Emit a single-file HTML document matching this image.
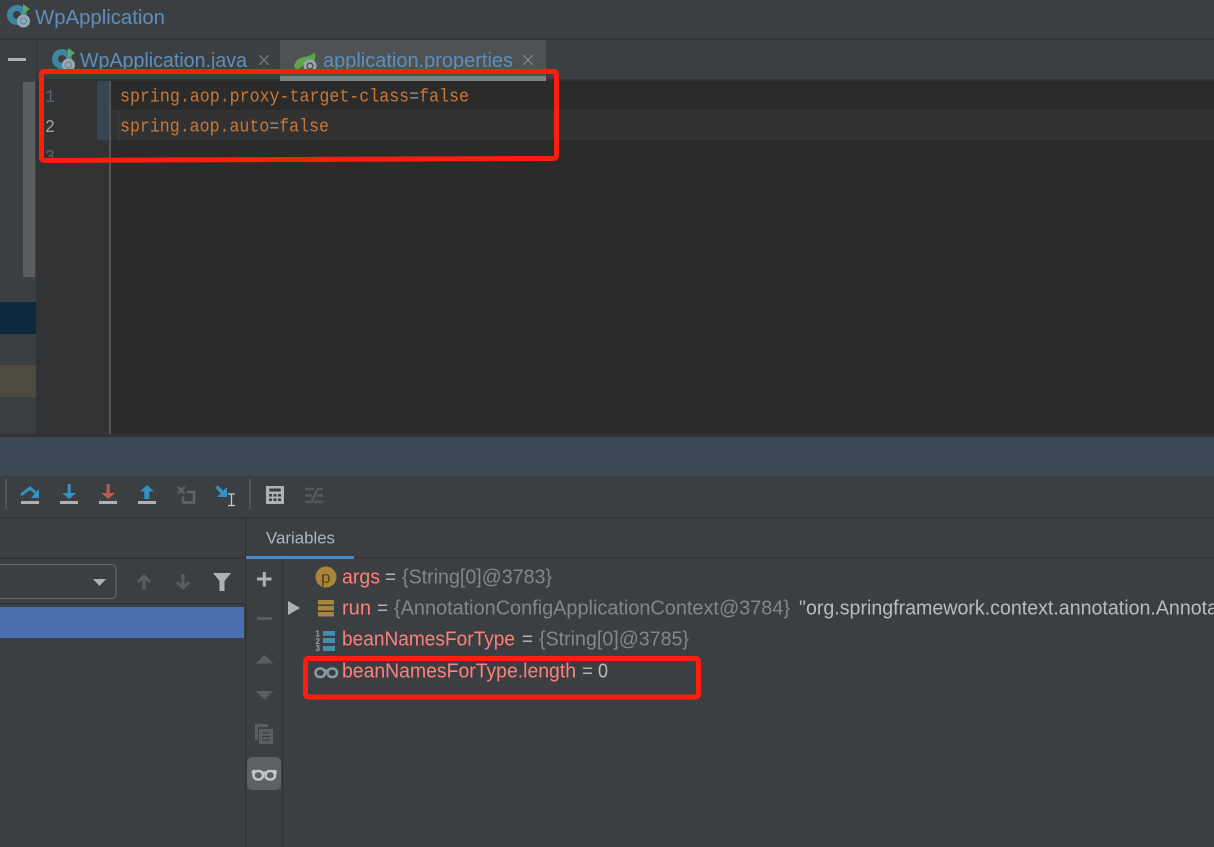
<!DOCTYPE html>
<html><head><meta charset="utf-8"><title>WpApplication</title>
<style>html,body{margin:0;padding:0;background:#3c3f41;width:1214px;height:847px;overflow:hidden}svg{display:block}
.s{font-family:"Liberation Sans",sans-serif}.m{font-family:"Liberation Mono",monospace}</style></head>
<body>
<svg width="1214" height="847" viewBox="0 0 1214 847" xmlns="http://www.w3.org/2000/svg">
<defs>
<g id="app"><circle cx="9" cy="10" r="10" fill="#3e86a0"/><circle cx="9" cy="10" r="4" fill="#3c3f41"/><path d="M15 -1l7 5-7 5z" fill="#59a869"/><circle cx="15.500" cy="16" r="5.500" fill="#9aa7b0" stroke="#9aa7b0" stroke-width="2"/><circle cx="15.500" cy="16" r="3" fill="none" stroke="#4a88a8" stroke-width="1"/></g>
</defs>
<rect width="1214" height="847" fill="#3c3f41"/>
<!-- title bar -->
<use href="#app" x="8" y="5"/>
<text class="s" x="35" y="24" font-size="20" fill="#5f8fbd" textLength="130" lengthAdjust="spacingAndGlyphs">WpApplication</text>
<rect y="38" width="1214" height="2" fill="#323232"/>
<!-- left panel -->
<rect y="40" width="36" height="394" fill="#3c3f41"/>
<rect x="36" y="38" width="1.500" height="396" fill="#323232"/>
<rect x="8" y="58" width="18" height="3" fill="#afb1b3"/>
<rect x="23" y="82" width="12" height="195" fill="#5a5c5e"/>
<rect y="302" width="36" height="32" fill="#0d293e"/>
<rect y="365" width="36" height="32" fill="#4d4a3f"/>
<!-- tabs -->
<rect x="37" y="40" width="1177" height="40" fill="#3c3f41"/>
<use href="#app" x="53" y="49"/>
<text class="s" x="80" y="67" font-size="20" fill="#5f8fbd" textLength="167" lengthAdjust="spacingAndGlyphs">WpApplication.java</text>
<path d="M259 55l10 10M269 55l-10 10" stroke="#6e7173" stroke-width="1.500" fill="none"/>
<rect x="280" y="40" width="266" height="40" fill="#4e5254"/>
<path d="M294 66Q296 58 304 57Q311 56 315 52Q316 60 313 63L305 63Q300 70 296 69Z" fill="#62a14d"/>
<circle cx="310" cy="66" r="6.500" fill="#9aa7b0"/><circle cx="310" cy="66" r="3" fill="none" stroke="#45494b" stroke-width="1.300"/>
<text class="s" x="323" y="67" font-size="20" fill="#5f8fbd" textLength="190" lengthAdjust="spacingAndGlyphs">application.properties</text>
<path d="M523 55l10 10M533 55l-10 10" stroke="#797c7e" stroke-width="1.500" fill="none"/>
<rect x="280" y="76" width="266" height="5" fill="#7d8082"/>
<rect x="37" y="79" width="243" height="2" fill="#323232"/>
<rect x="546" y="79" width="668" height="2" fill="#323232"/>
<!-- editor -->
<rect x="37" y="81" width="1177" height="353" fill="#2b2b2b"/>
<rect x="37" y="81" width="72" height="353" fill="#313335"/>
<rect x="109" y="81" width="2" height="353" fill="#555555"/>
<rect x="111" y="110" width="1103" height="30" fill="#323232"/>
<rect x="97" y="81" width="12" height="59" fill="#344653"/>
<rect x="118.500" y="110" width="1" height="30" fill="#3d3d3d"/>
<text class="m" x="45" y="102" font-size="18" fill="#606366" textLength="10" lengthAdjust="spacingAndGlyphs">1</text>
<text class="m" x="45" y="132" font-size="18" fill="#a4a3a3" textLength="10" lengthAdjust="spacingAndGlyphs">2</text>
<text class="m" x="45" y="162" font-size="18" fill="#606366" textLength="10" lengthAdjust="spacingAndGlyphs">3</text>
<text class="m" x="120" y="101.500" font-size="18" fill="#cc7832" textLength="349" lengthAdjust="spacingAndGlyphs"><tspan>spring.aop.proxy-target-class</tspan><tspan fill="#8f8f8f">=</tspan><tspan>false</tspan></text>
<text class="m" x="120" y="131.500" font-size="18" fill="#cc7832" textLength="209" lengthAdjust="spacingAndGlyphs"><tspan>spring.aop.auto</tspan><tspan fill="#8f8f8f">=</tspan><tspan>false</tspan></text>
<!-- divider and debug header -->
<rect y="434" width="1214" height="3" fill="#323232"/>
<rect y="437" width="1214" height="39" fill="#3b4754"/>
<!-- toolbar -->
<rect y="476" width="1214" height="41" fill="#3c3f41"/>
<rect x="5" y="479" width="2" height="30" fill="#515658"/>
<rect x="249" y="479" width="2" height="30" fill="#515658"/>
<rect x="21" y="501" width="18" height="3" fill="#afb1b3"/>
<path d="M21 495l9-7 6 5" fill="none" stroke="#3592c4" stroke-width="3"/><path d="M39 489v9h-8z" fill="#3592c4"/>
<rect x="60" y="501" width="18" height="3" fill="#afb1b3"/>
<path d="M67.700 484h3v9h5.500l-7 6-7-6h5.500z" fill="#3592c4"/>
<rect x="99" y="501" width="18" height="3" fill="#afb1b3"/>
<path d="M106.700 484h3v9h5.500l-7 6-7-6h5.500z" fill="#c75450"/>
<rect x="138" y="501" width="18" height="3" fill="#afb1b3"/>
<path d="M147 485l7 6.500h-4.700v7.500h-5v-7.500h-4.300z" fill="#3592c4"/>
<path d="M178 487l6.500 6.500M184.500 487l-6.500 6.500" stroke="#5f6365" stroke-width="2.500" fill="none"/><path d="M187 492h7v10.500h-11v-6" fill="none" stroke="#5f6365" stroke-width="2.500"/>
<path d="M216.500 486.500l8 8" stroke="#3592c4" stroke-width="3.500" fill="none"/><path d="M227 487v10h-10z" fill="#3592c4"/>
<path d="M228 494h7M228 505.500h7M231.500 494v11.500" stroke="#c8c8c8" stroke-width="1.300" fill="none"/>
<rect x="266" y="486" width="18" height="18" fill="#afb1b3"/><rect x="269.300" y="488.500" width="11.400" height="3" fill="#3c3f41"/>
<path d="M269 494h3v2.500h-3zM273.500 494h3v2.500h-3zM278 494h3v2.500h-3zM269 498.500h3v2.500h-3zM273.500 498.500h3v2.500h-3zM278 498.500h3v2.500h-3z" fill="#3c3f41"/>
<path d="M305 489h9M318 489h5M305 495.500h7M317 495.500h6M305 502h5M314 502h9M311 503l7-15" stroke="#55595b" stroke-width="2.500" fill="none"/>
<rect y="517" width="1214" height="1.500" fill="#323232"/>
<!-- frames panel -->
<rect y="557" width="245" height="2" fill="#323232"/>
<rect x="245" y="518" width="1.500" height="329" fill="#323232"/>
<rect x="-10" y="564.500" width="126" height="34" rx="4" fill="none" stroke="#646464" stroke-width="1.300"/>
<path d="M93 579h13l-6.500 7z" fill="#afb1b3"/>
<path d="M144 590v-14M138 582l6-6 6 6" stroke="#5b5e60" stroke-width="3" fill="none"/>
<path d="M183 574v14M177 582l6 6 6-6" stroke="#5b5e60" stroke-width="3" fill="none"/>
<path d="M213 573h18l-6.500 8v10h-5v-10z" fill="#afb1b3"/>
<rect y="603" width="245" height="1.500" fill="#323232"/>
<rect y="607" width="244" height="31" fill="#4b6eaf"/>
<!-- variables -->
<text class="s" x="266" y="543.500" font-size="16.500" fill="#a9b7c6" textLength="69" lengthAdjust="spacingAndGlyphs">Variables</text>
<rect x="246" y="556" width="108" height="3" fill="#4a88c7"/>
<rect x="354" y="557.500" width="860" height="1.300" fill="#323232"/>
<rect x="282" y="559" width="1.300" height="288" fill="#323232"/>
<path d="M257 579h14.500M264.300 572v14.500" stroke="#afb1b3" stroke-width="3" fill="none"/>
<rect x="257" y="617" width="15" height="3" fill="#5b5e60"/>
<path d="M255.500 663.500l9-8.500 9 8.500z" fill="#5b5e60"/>
<path d="M255.500 691h18l-9 8.500z" fill="#5b5e60"/>
<path d="M255 724h13v3h-10v13h-3z" fill="#5b5e60"/><rect x="259" y="729" width="14" height="15" fill="#5b5e60"/>
<path d="M262 733h8M262 736.500h8M262 740h8" stroke="#3c3f41" stroke-width="1.200"/>
<rect x="247" y="757" width="34" height="33" rx="5" fill="#5c6164"/>
<g fill="none" stroke="#c4c6c8" stroke-width="2.500"><rect x="253.500" y="771" width="9.500" height="8.500" rx="4.200"/><rect x="265.500" y="771" width="9.500" height="8.500" rx="4.200"/><path d="M263 773q1.200-1 2.500 0M253 774l0-2.500 2-1M275.500 774l0-2.500-2-1"/></g>
<circle cx="326" cy="577" r="10.500" fill="#a9853a"/>
<text class="s" x="321" y="583" font-size="17" fill="#54431f">p</text>
<path d="M288 601l12 7-12 7z" fill="#afb1b3"/>
<path d="M318 600h16v4.500h-16zM318 606h16v4.500h-16zM318 612h16v4.500h-16z" fill="#a9853a"/>
<text class="s" font-size="8" font-weight="bold" x="315.500" y="636.500" fill="#9aa7b0">1</text>
<text class="s" font-size="8" font-weight="bold" x="315.500" y="644" fill="#9aa7b0">2</text>
<text class="s" font-size="8" font-weight="bold" x="315.500" y="651" fill="#9aa7b0">3</text>
<path d="M323 631h12v4.700h-12zM323 638h12v5h-12zM323 646h12v5h-12z" fill="#3e8fb0"/>
<g fill="none" stroke="#8d9aa3" stroke-width="2.500"><rect x="315.500" y="668.500" width="9.500" height="8.500" rx="4.200"/><rect x="327.500" y="668.500" width="9.500" height="8.500" rx="4.200"/><path d="M325 671q1.200-1 2.500 0"/></g>
<g class="s" font-size="20">
<text x="342" y="583.700" fill="#ff7f7f" textLength="38" lengthAdjust="spacingAndGlyphs">args</text>
<text x="385" y="583.700" fill="#afb1b3" textLength="11" lengthAdjust="spacingAndGlyphs">=</text>
<text x="402" y="583.700" fill="#84878a" textLength="150" lengthAdjust="spacingAndGlyphs">{String[0]@3783}</text>
<text x="342" y="614.700" fill="#ff7f7f" textLength="29" lengthAdjust="spacingAndGlyphs">run</text>
<text x="377" y="614.700" fill="#afb1b3" textLength="11" lengthAdjust="spacingAndGlyphs">=</text>
<text x="394" y="614.700" fill="#84878a" textLength="396" lengthAdjust="spacingAndGlyphs">{AnnotationConfigApplicationContext@3784}</text>
<text x="799" y="614.700" fill="#bbbbbb" textLength="419" lengthAdjust="spacingAndGlyphs">"org.springframework.context.annotation.Annota</text>
<text x="342" y="645.700" fill="#ff7f7f" textLength="173" lengthAdjust="spacingAndGlyphs">beanNamesForType</text>
<text x="522" y="645.700" fill="#afb1b3" textLength="11" lengthAdjust="spacingAndGlyphs">=</text>
<text x="539" y="645.700" fill="#84878a" textLength="150" lengthAdjust="spacingAndGlyphs">{String[0]@3785}</text>
<text x="342" y="677.700" fill="#ff7f7f" textLength="234" lengthAdjust="spacingAndGlyphs">beanNamesForType.length</text>
<text x="582" y="677.700" fill="#afb1b3" textLength="11" lengthAdjust="spacingAndGlyphs">=</text>
<text x="598" y="677.700" fill="#bbbbbb" textLength="10" lengthAdjust="spacingAndGlyphs">0</text>
</g>
<!-- red annotations -->
<path d="M45 71.500H553Q556.500 71.500 556.500 75V155Q556.500 158.500 553 158.500L45 160.500Q41.500 160.500 41.500 157V75Q41.500 71.500 45 71.500Z" fill="none" stroke="#ff1e0e" stroke-width="5"/>
<rect x="305.500" y="658.500" width="393" height="38.500" rx="3" fill="none" stroke="#ff1e0e" stroke-width="5"/>
</svg>
</body></html>
